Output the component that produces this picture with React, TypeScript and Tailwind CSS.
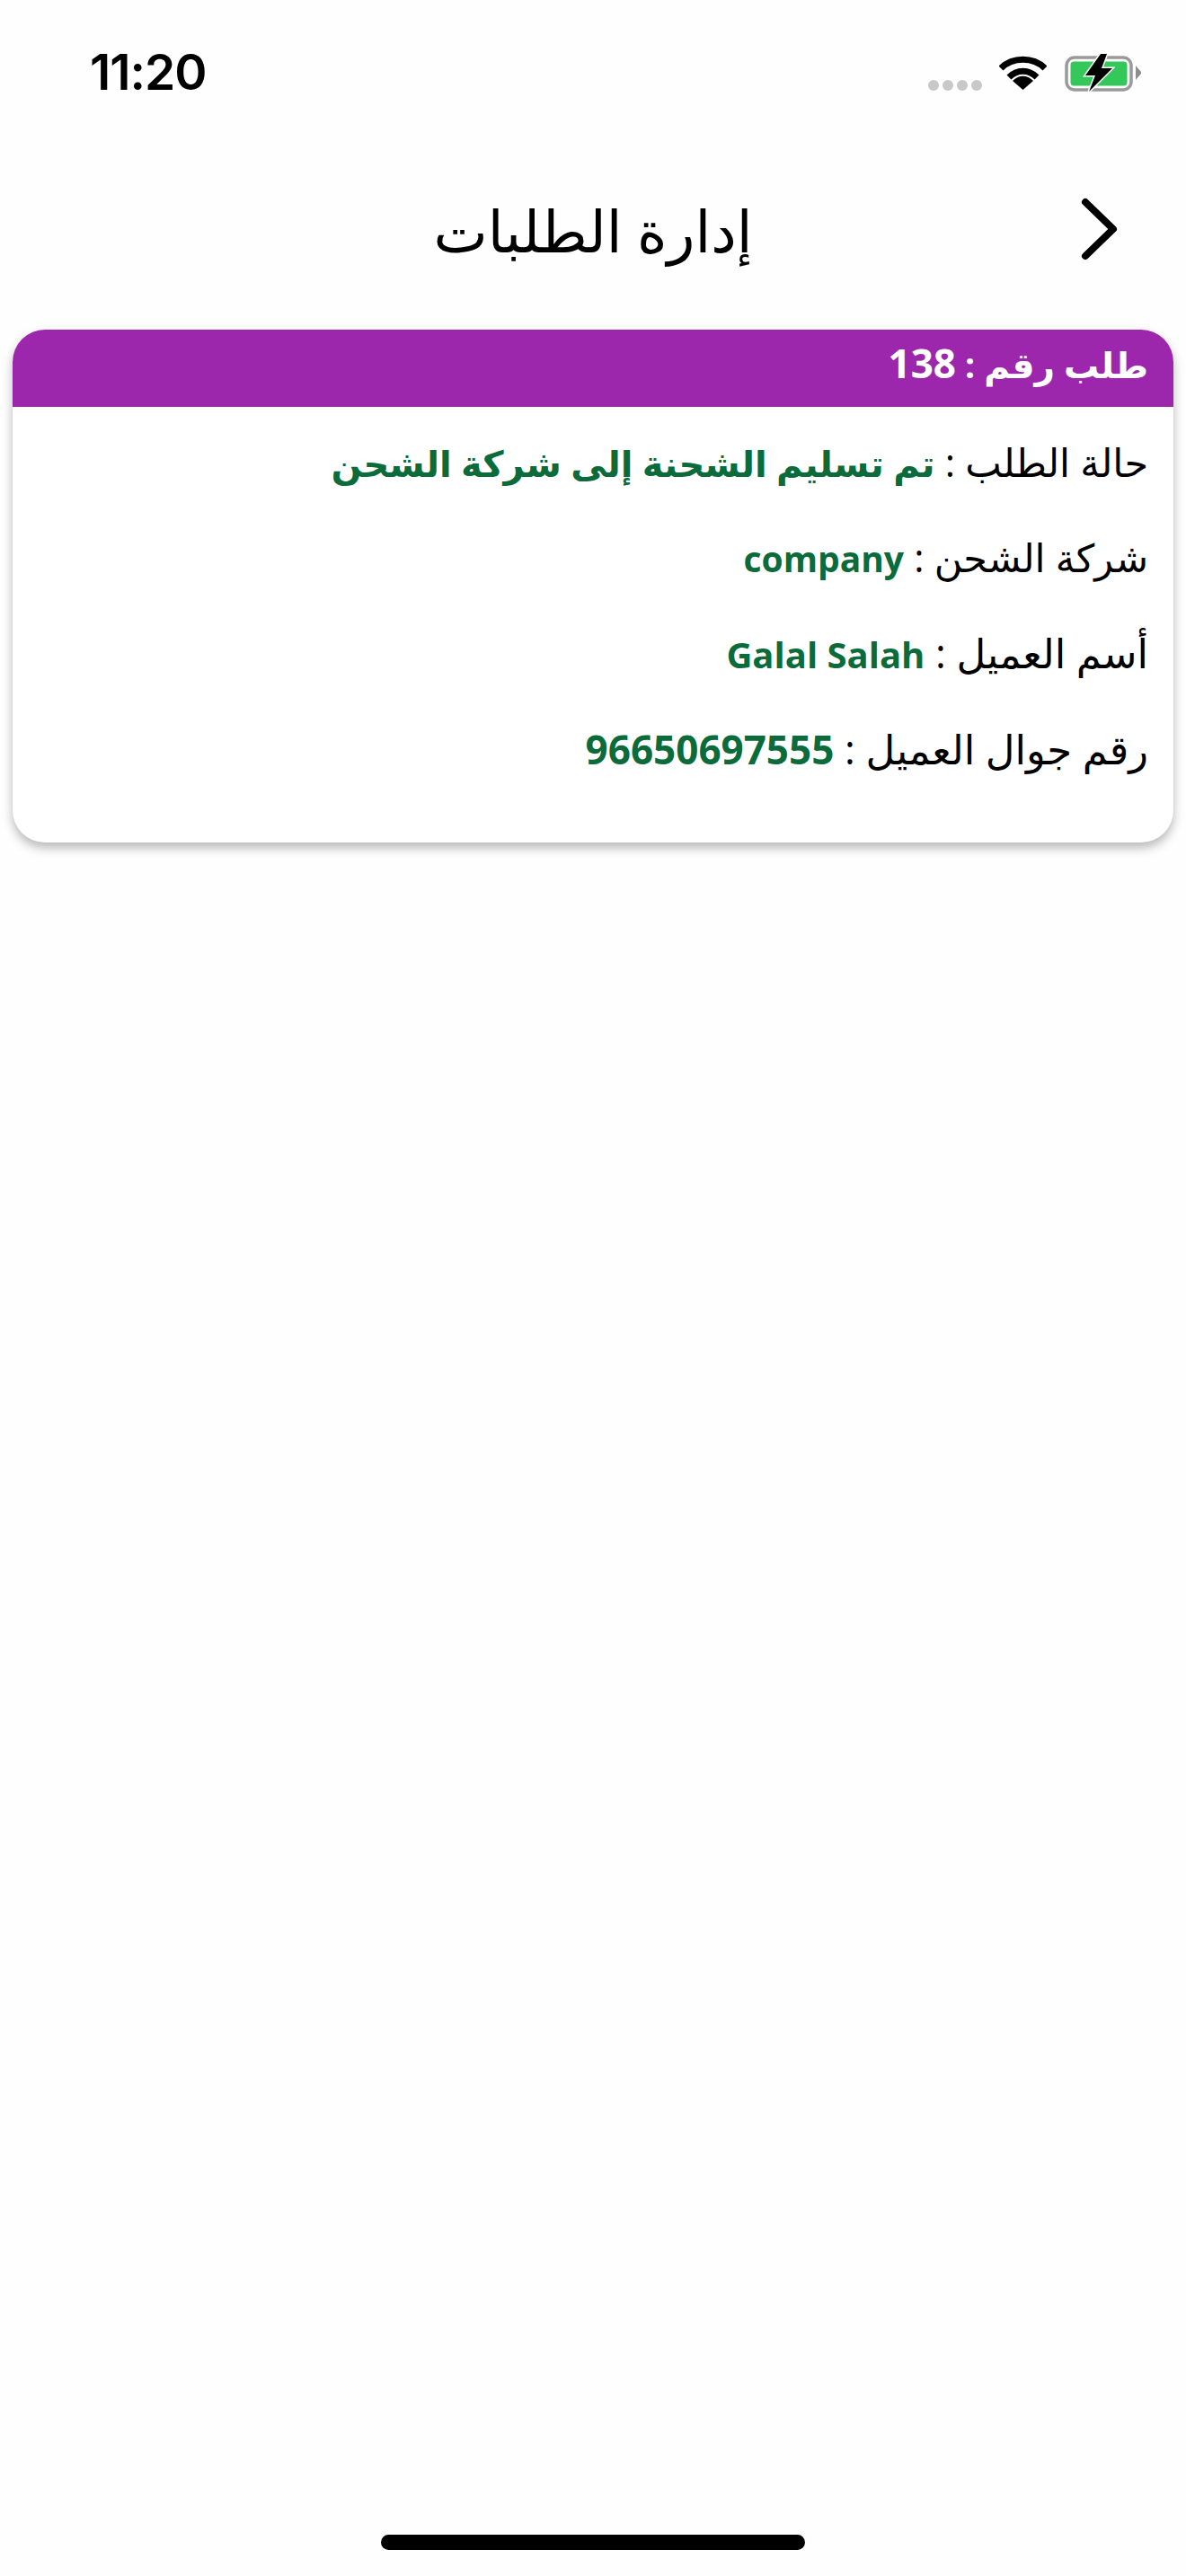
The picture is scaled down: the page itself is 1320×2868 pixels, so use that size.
import React from "react";

const rows = [
  { label: "حالة الطلب :", labelClass: "text-[43px]", value: "تم تسليم الشحنة إلى شركة الشحن", valueClass: "text-[40px]" },
  { label: "شركة الشحن :", labelClass: "text-[43px]", value: "company", valueClass: "text-[39px]" },
  { label: "أسم العميل :", labelClass: "text-[45px]", value: "Galal Salah", valueClass: "text-[40px]" },
  { label: "رقم جوال العميل :", labelClass: "text-[45px]", value: "96650697555", valueClass: "text-[44px]" },
];

const StatusIcons = () => (
  <div className="flex items-end">
    <div className="flex gap-[4px] mb-[1px]">
      <span className="w-[12px] h-[12px] rounded-full bg-[#c8c8c8]" />
      <span className="w-[12px] h-[12px] rounded-full bg-[#c8c8c8]" />
      <span className="w-[12px] h-[12px] rounded-full bg-[#c8c8c8]" />
      <span className="w-[12px] h-[12px] rounded-full bg-[#c8c8c8]" />
    </div>
    <svg className="ml-[19px] mb-[2px]" width="53" height="38" viewBox="0 0 53 38" fill="none" stroke="#000" strokeWidth="7">
      <path d="M2 14 C15 1 38 1 51 14" />
      <path d="M11 24 C20 15 33 15 42 24" />
      <path d="M15 28 C22 21 31 21 38 28 L26.5 38 Z" fill="#000" stroke="none" />
    </svg>
    <svg className="ml-[20px]" width="85" height="42" viewBox="0 0 85 42" fill="none">
      <rect x="2" y="4" width="72" height="36" rx="9" stroke="#9a9a9a" strokeWidth="3.5" />
      <rect x="6.5" y="8.5" width="63" height="27" rx="4" fill="#34c759" />
      <path d="M79 13 L85 20 L85 22 L79 29 Z" fill="#8e8e8e" />
      <path d="M40 0 L23 24 L34 24 L27 42 L53 16 L41 16 L47 0 Z" fill="#000" stroke="#fff" strokeWidth="3" paintOrder="stroke" />
    </svg>
  </div>
);

export default function App() {
  return (
    <div className="min-h-[2868px] bg-[#fefefe] flex flex-col font-['Open_Sans','DejaVu_Sans',sans-serif]">
      <div className="flex items-end justify-between pl-[100px] pr-[50px] h-[102px]">
        <span className="text-[55px] leading-[44px] font-semibold text-black font-['Inter',sans-serif] tracking-[-1px]">11:20</span>
        <StatusIcons />
      </div>

      <div className="flex items-center justify-center relative h-[104px] mt-[106px]">
        <h1 dir="rtl" className="text-[64px] leading-[80px] text-black font-normal -mt-[6px]">إدارة الطلبات</h1>
        <svg className="absolute right-[74px] top-[12px]" width="44" height="70" viewBox="0 0 44 70" fill="none" stroke="#000" strokeWidth="8" strokeLinecap="round" strokeLinejoin="round">
          <path d="M6 5 L37 35 L6 65" />
        </svg>
      </div>

      <div className="mx-[14px] mt-[55px] h-[571px] rounded-[36px] bg-white overflow-hidden shadow-[0_6px_12px_rgba(0,0,0,0.28)]" dir="rtl">
        <div className="h-[86px] bg-[#9c27ad] pr-[28px] pb-[12px] flex items-center">
          <span className="text-white text-[39px] font-bold">
            طلب رقم : <span className="text-[44px]">138</span>
          </span>
        </div>
        <div className="flex flex-col pr-[28px] pt-[20px] gap-[21px]">
          {rows.map((row) => (
            <p key={row.label} className={`${row.labelClass} leading-[84px] text-black`}>
              {row.label} <span className={`${row.valueClass} font-bold text-[#0b6b3a]`}>{row.value}</span>
            </p>
          ))}
        </div>
      </div>

      <div className="mt-auto flex justify-center pb-[29px]">
        <div className="w-[472px] h-[17px] rounded-full bg-black" />
      </div>
    </div>
  );
}
